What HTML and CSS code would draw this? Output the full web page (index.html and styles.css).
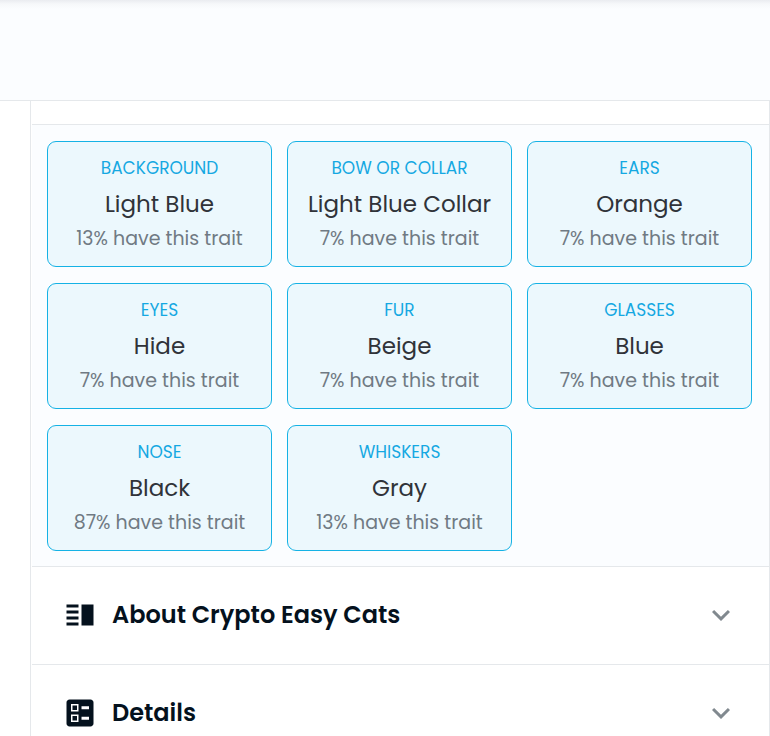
FILE: index.html
```html
<!DOCTYPE html>
<html lang="en">
<head>
<meta charset="utf-8">
<meta name="viewport" content="width=device-width, initial-scale=1">
<title>Crypto Easy Cats</title>
<link rel="stylesheet" href="styles.css">
</head>
<body>
<header class="topbar"></header>
<main class="panel">
  <div class="panel-head"></div>
  <section class="traits" aria-label="Properties">
    <a class="trait" href="#"><span class="type">Background</span><span class="value">Light Blue</span><span class="rarity">13% have this trait</span></a>
    <a class="trait" href="#"><span class="type">Bow or Collar</span><span class="value">Light Blue Collar</span><span class="rarity">7% have this trait</span></a>
    <a class="trait" href="#"><span class="type">Ears</span><span class="value">Orange</span><span class="rarity">7% have this trait</span></a>
    <a class="trait" href="#"><span class="type">Eyes</span><span class="value">Hide</span><span class="rarity">7% have this trait</span></a>
    <a class="trait" href="#"><span class="type">Fur</span><span class="value">Beige</span><span class="rarity">7% have this trait</span></a>
    <a class="trait" href="#"><span class="type">Glasses</span><span class="value">Blue</span><span class="rarity">7% have this trait</span></a>
    <a class="trait" href="#"><span class="type">Nose</span><span class="value">Black</span><span class="rarity">87% have this trait</span></a>
    <a class="trait" href="#"><span class="type">Whiskers</span><span class="value">Gray</span><span class="rarity">13% have this trait</span></a>
  </section>
  <button class="row" type="button">
    <svg class="icon" viewBox="0 0 24 24" aria-hidden="true"><path d="M3 15h8v-2H3v2zm0 4h8v-2H3v2zm0-8h8V9H3v2zm0-6v2h8V5H3zm10 0h8v14h-8V5z"/></svg>
    <span class="row-title">About Crypto Easy Cats</span>
    <svg class="icon chevron" viewBox="0 0 24 24" aria-hidden="true"><path d="M16.59 8.59L12 13.17 7.41 8.59 6 10l6 6 6-6z"/></svg>
  </button>
  <button class="row" type="button">
    <svg class="icon" viewBox="0 0 24 24" aria-hidden="true"><path d="M13 9.5h5v-2h-5v2zm0 7h5v-2h-5v2zm6 4.5H5c-1.1 0-2-.9-2-2V5c0-1.1.9-2 2-2h14c1.1 0 2 .9 2 2v14c0 1.1-.9 2-2 2zM6 11h5V6H6v5zm1-4h3v3H7V7zM6 18h5v-5H6v5zm1-4h3v3H7v-3z"/></svg>
    <span class="row-title">Details</span>
    <svg class="icon chevron" viewBox="0 0 24 24" aria-hidden="true"><path d="M16.59 8.59L12 13.17 7.41 8.59 6 10l6 6 6-6z"/></svg>
  </button>
</main>
</body>
</html>
```
FILE: styles.css
```css
* {
  box-sizing: border-box;
}

body {
  margin: 0;
  height: 100vh;
  overflow: hidden;
  background: #fff;
  color: #04111d;
  font-family: Poppins, Inter, "Open Sans", sans-serif;
}

.topbar {
  height: 101px;
  border-bottom: 1px solid #e5e8eb;
  background: linear-gradient(#eaecf0, #f6f8fa 4px, #fbfdff 9px);
}

.panel {
  margin-left: 30px;
  padding-left: 1px;
  border: solid #e5e8eb;
  border-width: 0 1px;
}

.panel-head {
  height: 24px;
  border-bottom: 1px solid #e5e8eb;
}

.traits {
  display: grid;
  grid-template-columns: repeat(3, 1fr);
  gap: 16px 15px;
  padding: 16px 17px 15px 15px;
  background: #fbfdff;
}

.trait {
  display: flex;
  flex-direction: column;
  align-items: center;
  padding: 12px 8px 13px;
  border: 1px solid #15b2e5;
  border-radius: 9px;
  background: #ecf8fd;
  text-decoration: none;
  white-space: nowrap;
}

.type {
  color: #15a8e2;
  font-size: 17px;
  font-weight: 400;
  line-height: 29px;
  text-transform: uppercase;
}

.value {
  color: #303339;
  font-size: 23px;
  font-weight: 400;
  line-height: 42px;
}

.rarity {
  color: #707a83;
  font-size: 19px;
  font-weight: 400;
  line-height: 28px;
}

.row {
  display: flex;
  align-items: center;
  gap: 14px;
  width: 100%;
  height: 98px;
  padding: 0 30px 2px;
  border: 0;
  border-top: 1px solid #e5e8eb;
  background: #fff;
  color: inherit;
  font: inherit;
  text-align: left;
}

.icon {
  flex: none;
  width: 36px;
  height: 36px;
  fill: #04111d;
}

.row-title {
  flex: 1;
  font-size: 24px;
  font-weight: 600;
}

.chevron {
  fill: #81898f;
}
```
